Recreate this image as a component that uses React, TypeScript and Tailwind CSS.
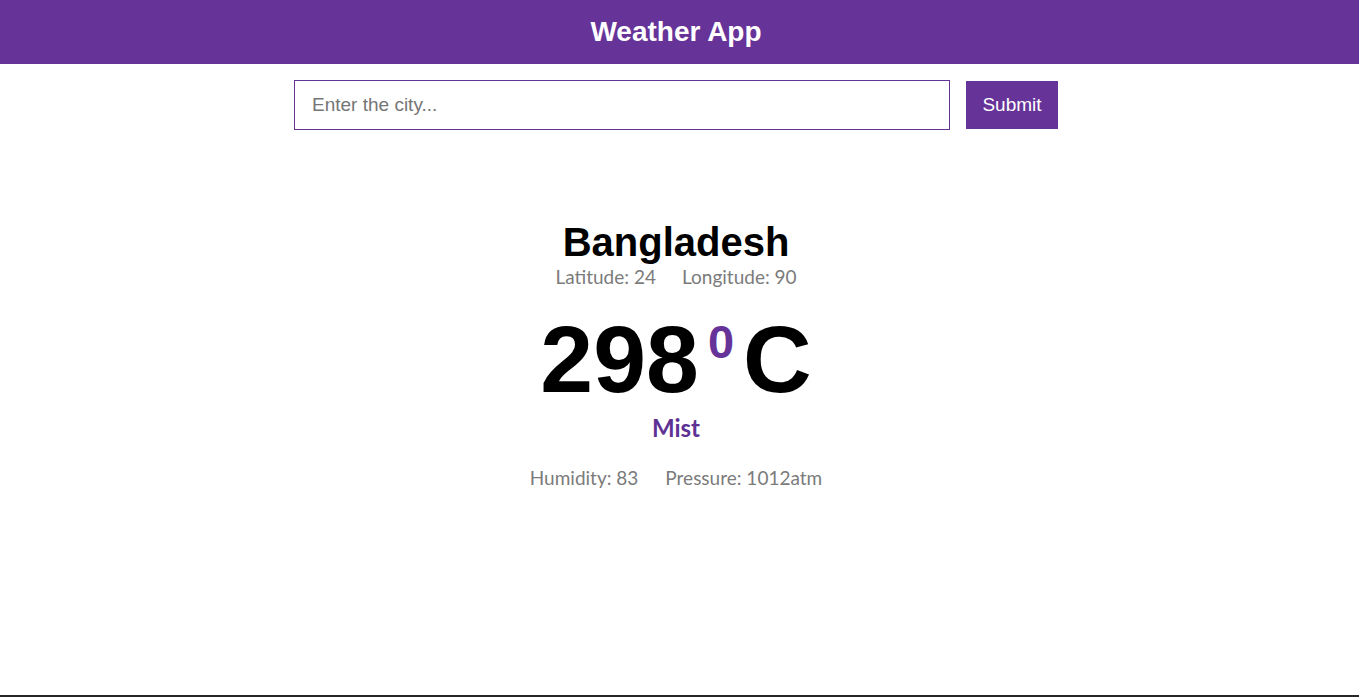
export default function App() {
  return (
    <div className="h-screen flex flex-col bg-white" style={{ fontFamily: '"Liberation Sans", Arial, sans-serif' }}>
      <header className="h-16 shrink-0 bg-[#663399] flex items-center justify-center pr-[7px]">
        <h1 className="text-[28px] font-bold text-white leading-none">Weather App</h1>
      </header>
      <main className="flex-1 flex flex-col items-center pr-[7px]">
        <form className="mt-4 flex items-center gap-4" onSubmit={(e) => e.preventDefault()}>
          <input
            type="text"
            placeholder="Enter the city..."
            className="w-[656px] h-[50px] border border-[#663399] px-[17px] text-[19px] text-gray-800 placeholder:text-[#757575] outline-none"
          />
          <button type="submit" className="w-[92px] h-12 bg-[#663399] text-white text-[19px]">
            Submit
          </button>
        </form>

        <section className="mt-[89px] flex flex-col items-center">
          <h2 className="text-[40px] leading-[46px] font-bold text-black">Bangladesh</h2>
          <div
            className="flex gap-[26px] text-[19px] leading-[23px] text-[#7b7b7b]"
            style={{ fontFamily: 'Lato, "Noto Sans", sans-serif' }}
          >
            <span>Latitude: 24</span>
            <span>Longitude: 90</span>
          </div>
          <div className="mt-[24px] flex items-start font-bold text-black">
            <span className="text-[95px] leading-[95px]">298</span>
            <span className="mt-[6px] mx-[9px] text-[47px] leading-[47px] text-[#663399]">0</span>
            <span className="text-[95px] leading-[95px]">C</span>
          </div>
          <div
            className="mt-[6px] text-[24px] leading-[29px] font-bold text-[#5e3295]"
            style={{ fontFamily: 'Lato, "Noto Sans", sans-serif' }}
          >
            Mist
          </div>
          <div
            className="mt-[24px] flex gap-[27px] text-[19px] leading-[23px] text-[#7b7b7b]"
            style={{ fontFamily: 'Lato, "Noto Sans", sans-serif' }}
          >
            <span>Humidity: 83</span>
            <span>Pressure: 1012atm</span>
          </div>
        </section>
      </main>
      <div className="h-[2px] shrink-0 bg-[#262626]" />
    </div>
  );
}
